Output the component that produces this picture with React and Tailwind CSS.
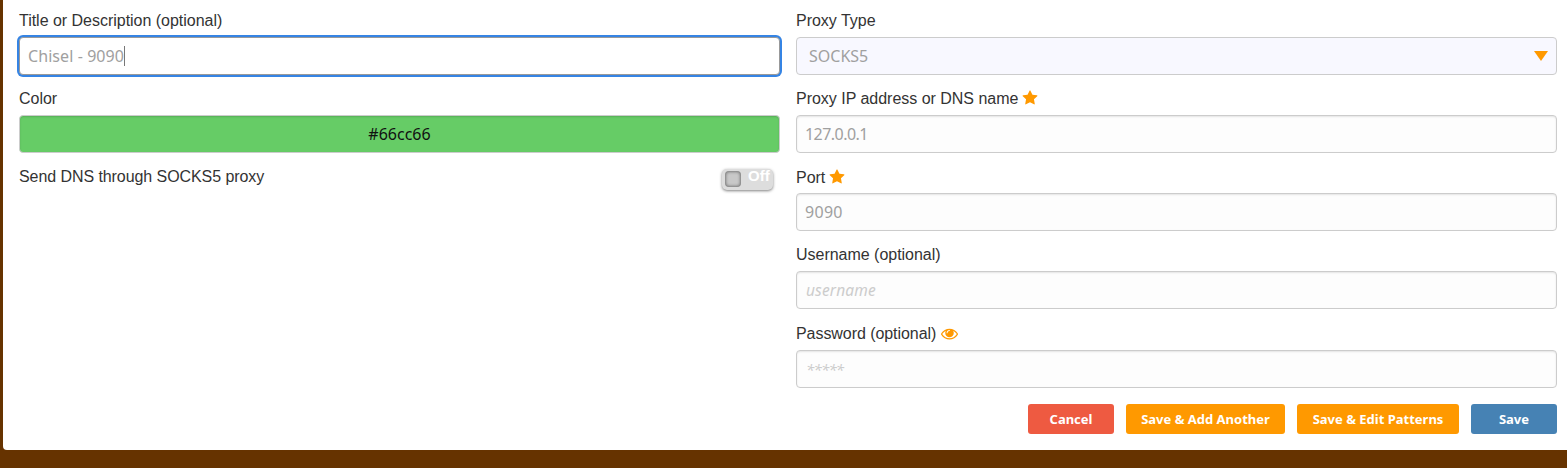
import React from "react";

const fieldFont = "font-['Noto_Sans',sans-serif]";
const box =
  "flex h-[38px] w-full items-center rounded-[4px] border bg-[#fdfdfd] shadow-[inset_0_1px_2px_rgba(0,0,0,0.1)]";

function Label({ children }) {
  return (
    <div className="flex h-[18px] items-center whitespace-nowrap pt-[2px] text-[16px] leading-[18px] tracking-[-0.02px] text-[#333]">
      {children}
    </div>
  );
}

function Star() {
  return (
    <svg viewBox="0 0 1792 1792" className="mb-[2px] ml-1 size-4 shrink-0 fill-[#f90]">
      <path d="M1728 647q0 22-26 48l-363 354 86 500q1 7 1 20 0 21-10.5 35.5t-30.5 14.5q-19 0-40-12l-449-236-449 236q-22 12-40 12-21 0-31.5-14.5t-10.5-35.5q0-6 2-20l86-500-364-354q-25-27-25-48 0-37 56-46l502-73 225-455q19-41 49-41t49 41l225 455 502 73q56 9 56 46z" />
    </svg>
  );
}

function Eye() {
  return (
    <svg viewBox="0 0 1792 1792" className="mb-[2px] ml-[5px] size-[17px] shrink-0 fill-[#f90]">
      <path d="M1664 960q-152-236-381-353 61 104 61 225 0 185-131.5 316.5t-316.5 131.5-316.5-131.5-131.5-316.5q0-121 61-225-229 117-381 353 133 205 333.5 326.5t434.5 121.5 434.5-121.5 333.5-326.5zm-720-384q0-20-14-34t-34-14q-125 0-214.5 89.5t-89.5 214.5q0 20 14 34t34 14 34-14 14-34q0-86 61-147t147-61q20 0 34-14t14-34zm848 384q0 34-20 69-140 230-376.5 368.5t-499.5 138.5-499.5-139-376.5-368q-20-35-20-69t20-69q140-229 376.5-368t499.5-139 499.5 139 376.5 368q20 35 20 69z" />
    </svg>
  );
}

export default function App() {
  return (
    <div className="h-[468px] w-full bg-[#630] pl-[3px] font-['Liberation_Sans',Arial,sans-serif]">
      <div className="flex h-[450px] flex-col rounded-bl-[4px] bg-white pl-4 pr-[10px] pt-[11px]">
        <div className="grid grid-cols-2 gap-4">
          <div>
            <Label>Title or Description (optional)</Label>
            <div className="mt-2 flex h-[38px] w-full items-center rounded-[4px] border border-[#999] bg-white pl-2 text-[16px] tracking-[0.08px] text-[#a0a0a0] ring-2 ring-[#3584e4] font-['Noto_Sans',sans-serif]">
              <span>Chisel - 9090</span>
              <span className="h-5 w-px bg-[#777]" />
            </div>
            <div className="mt-[14px]">
              <Label>Color</Label>
            </div>
            <div className="mt-2 flex h-[38px] items-center justify-center rounded-[4px] border border-[#ccc] bg-[#6c6] text-[16px] text-[#111] shadow-[inset_0_1px_2px_rgba(0,0,0,0.15)]">
              <span className={fieldFont}>#66cc66</span>
            </div>
            <div className="mt-[14px] flex items-start justify-between pr-[7px]">
              <Label><span className="tracking-[-0.07px]">Send DNS through SOCKS5 proxy</span></Label>
              <div className="mt-[2px] flex h-[21px] w-[51px] items-start rounded-[5px] bg-[#ddd] pl-[3px] shadow-[0_1px_3px_rgba(0,0,0,0.5)]">
                <span className="mt-[2px] size-4 rounded-[4px] bg-[#c8c8c8] shadow-[inset_0_0_3px_1px_rgba(0,0,0,0.4)]" />
                <span className="-mt-[2px] ml-[7px] text-[15px] font-bold leading-[18px] text-white">Off</span>
              </div>
            </div>
          </div>
          <div>
            <Label>Proxy Type</Label>
            <div className={`mt-2 flex h-[38px] items-center justify-between rounded-[4px] border border-[#ccc] bg-[#f8f8ff] pl-3 pr-2 text-[16px] text-[#a0a0a0] ${fieldFont}`}>
              <span>SOCKS5</span>
              <svg viewBox="0 0 14 10" className="h-[10px] w-[14px] fill-[#f90]">
                <path d="M0 0h14L7 10z" />
              </svg>
            </div>
            <div className="mt-[14px]">
              <Label>Proxy IP address or DNS name<Star /></Label>
            </div>
            <div className={`${box} mt-2 border-[#ccc] pl-2 text-[16px] tracking-[-0.55px] text-[#a0a0a0] ${fieldFont}`}>127.0.0.1</div>
            <div className="mt-[15px]">
              <Label>Port<Star /></Label>
            </div>
            <div className={`${box} mt-[7px] border-[#ccc] pl-2 text-[16px] tracking-[0.3px] text-[#a0a0a0] ${fieldFont}`}>9090</div>
            <div className="mt-[14px]">
              <Label>Username (optional)</Label>
            </div>
            <div className={`${box} mt-2 border-[#ccc] pl-[9px] pt-[2px] text-[15.5px] italic tracking-[0.15px] text-[#ccc] ${fieldFont}`}>username</div>
            <div className="mt-[15px]">
              <Label><span className="tracking-[-0.06px]">Password (optional)</span><Eye /></Label>
            </div>
            <div className={`${box} mt-2 border-[#ccc] pl-[9px] text-[15px] italic tracking-[-0.8px] text-[#ccc] ${fieldFont}`}>*****</div>
          </div>
        </div>
        <div className={`mt-4 flex h-[30px] justify-end gap-3 text-[13px] font-bold text-white ${fieldFont}`}>
          <button className="w-[86px] rounded-[3px] bg-[#ee5a41] pt-px">Cancel</button>
          <button className="w-[159px] rounded-[3px] bg-[#f90] pt-px">Save &amp; Add Another</button>
          <button className="w-[162px] rounded-[3px] bg-[#f90] pt-px">Save &amp; Edit Patterns</button>
          <button className="w-[86px] rounded-[3px] bg-[#4682b4] pt-px">Save</button>
        </div>
      </div>
    </div>
  );
}
